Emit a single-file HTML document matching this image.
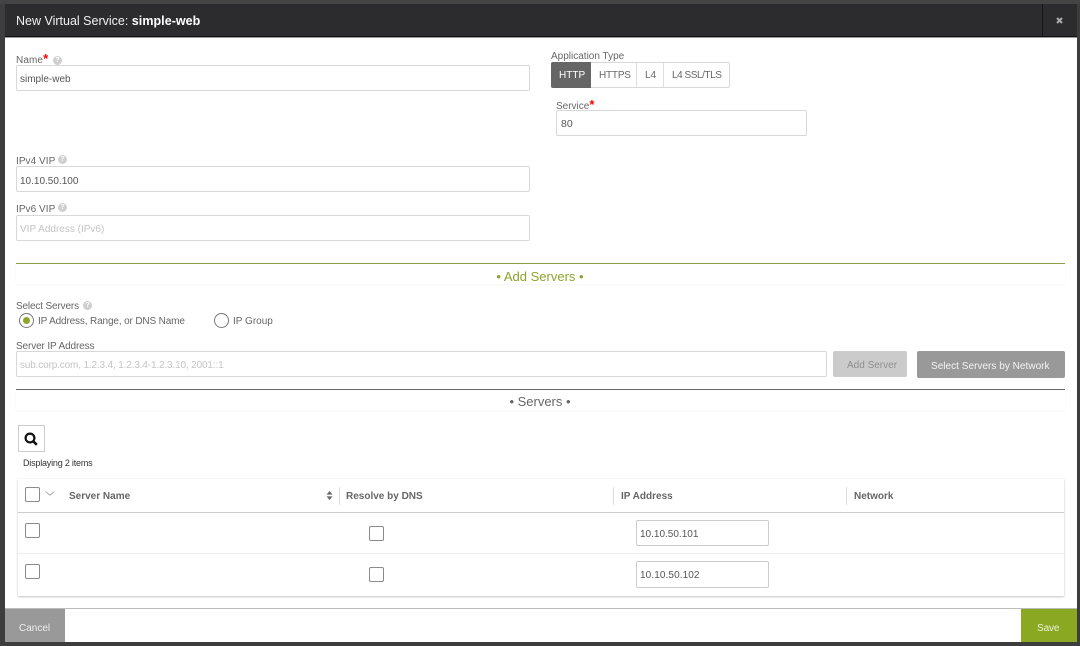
<!DOCTYPE html>
<html><head><meta charset="utf-8"><style>
html,body{margin:0;padding:0}
body{width:1080px;height:646px;overflow:hidden;background:#3d3d3d;position:relative;font-family:"Liberation Sans",sans-serif;font-size:10px;color:#666}
#w{position:absolute;left:0;top:0;width:1080px;height:646px;filter:blur(.3px)}
#w div,#w span.t,#w svg{position:absolute}
.t{white-space:nowrap;position:absolute;line-height:12px}
.i{box-sizing:border-box;background:#fff;border:1px solid #d8d8d8;border-radius:2px}
.c{box-sizing:border-box;width:15px;height:15px;border:1px solid #8a8a8a;border-radius:2px;background:#fff}
.q{box-sizing:border-box;width:9px;height:9px;border-radius:50%;background:#cfcfcf;color:#fff;font-size:7px;line-height:9px;text-align:center;font-weight:bold}
.r{color:#f00;font-weight:bold;font-size:13px;line-height:0}
.h{font-weight:bold;color:#666;font-size:10px}
.s{background:#ddd;width:1px}
</style></head><body><div id="w">
<div style="left:0;top:0;width:1080px;height:4px;background:#444"></div>
<div style="left:5px;top:37px;width:1072px;height:572px;background:#fff"></div>
<div style="left:5px;top:4px;width:1072px;height:33px;background:#2c2c2e;border-bottom:1px solid #111;box-sizing:border-box"></div>
<div style="left:5px;top:37px;width:1072px;height:1px;background:#999"></div>
<div style="left:1042px;top:4px;width:1px;height:32px;background:#151515"></div>
<span class="t" style="left:16px;top:15px;font-size:12.5px;color:#f0f0f0">New Virtual Service: <b style="color:#fff;letter-spacing:.05px">simple-web</b></span>
<svg style="left:1056px;top:17px" width="7" height="7" viewBox="0 0 7 7"><path d="M1 1L6 6M6 1L1 6" stroke="#aaa" stroke-width="2"/></svg>

<span class="t" style="left:16px;top:55px;letter-spacing:.1px">Name<span class="r">*</span></span>
<div class="q" style="left:53px;top:56px">?</div>
<div class="i" style="left:16px;top:65px;width:514px;height:26px"></div>
<span class="t" style="left:20px;top:74px;color:#555">simple-web</span>

<span class="t" style="left:551px;top:51px">Application Type</span>
<div class="i" style="left:551px;top:62px;width:179px;height:26px"></div>
<div style="left:551px;top:62px;width:40px;height:26px;background:#666;border-radius:2px 0 0 2px"></div>
<span class="t" style="left:559px;top:70px;color:#fff">HTTP</span>
<span class="t" style="left:599px;top:70px;letter-spacing:-.2px">HTTPS</span>
<div class="s" style="left:636px;top:63px;height:24px"></div>
<span class="t" style="left:645px;top:70px">L4</span>
<div class="s" style="left:663px;top:63px;height:24px"></div>
<span class="t" style="left:672px;top:70px;letter-spacing:-.45px">L4 SSL/TLS</span>

<span class="t" style="left:556px;top:101px">Service<span class="r">*</span></span>
<div class="i" style="left:556px;top:110px;width:251px;height:26px"></div>
<span class="t" style="left:561px;top:118px;color:#555;font-size:10.5px">80</span>

<span class="t" style="left:16px;top:156px;letter-spacing:.05px">IPv4 VIP</span>
<div class="q" style="left:58px;top:155px">?</div>
<div class="i" style="left:16px;top:166px;width:514px;height:26px"></div>
<span class="t" style="left:20px;top:176px;color:#555">10.10.50.100</span>

<span class="t" style="left:16px;top:204px;letter-spacing:.05px">IPv6 VIP</span>
<div class="q" style="left:58px;top:203px">?</div>
<div class="i" style="left:16px;top:215px;width:514px;height:26px"></div>
<span class="t" style="left:20px;top:224px;color:#c4c4c4">VIP Address (IPv6)</span>

<div style="left:16px;top:263px;width:1049px;height:21px;border-top:1px solid #8b9e45;box-sizing:border-box;box-shadow:0 1px 2px #f6f6f6"></div>
<span class="t" style="left:0;top:271px;width:1080px;text-align:center;font-size:13px;color:#8aa62a">• Add Servers •</span>

<span class="t" style="left:16px;top:301px;letter-spacing:-.15px">Select Servers</span>
<div class="q" style="left:83px;top:301px">?</div>
<div style="left:19px;top:313px;width:15px;height:15px;box-sizing:border-box;border:1px solid #777;border-radius:50%"></div>
<div style="left:23px;top:317px;width:7px;height:7px;background:#8aa62a;border-radius:50%"></div>
<span class="t" style="left:38px;top:316px;letter-spacing:-.14px">IP Address, Range, or DNS Name</span>
<div style="left:214px;top:313px;width:15px;height:15px;box-sizing:border-box;border:1px solid #777;border-radius:50%"></div>
<span class="t" style="left:233px;top:316px">IP Group</span>

<span class="t" style="left:16px;top:341px;letter-spacing:-.12px">Server IP Address</span>
<div class="i" style="left:16px;top:351px;width:811px;height:26px"></div>
<span class="t" style="left:20px;top:360px;color:#c4c4c4;letter-spacing:-.15px">sub.corp.com, 1.2.3.4, 1.2.3.4-1.2.3.10, 2001::1</span>
<div style="left:833px;top:351px;width:74px;height:26px;background:#cbcbcb;border-radius:2px"></div>
<span class="t" style="left:847px;top:360px;color:#8f8f8f">Add Server</span>
<div style="left:917px;top:351px;width:148px;height:27px;background:#999;border-radius:2px"></div>
<span class="t" style="left:931px;top:361px;color:#f4f4f4;letter-spacing:.03px">Select Servers by Network</span>

<div style="left:16px;top:389px;width:1049px;height:21px;border-top:1px solid #666;box-sizing:border-box;box-shadow:0 1px 2px #f6f6f6"></div>
<span class="t" style="left:0;top:396px;width:1080px;text-align:center;font-size:13px;color:#666">• Servers •</span>

<div style="left:18px;top:425px;width:27px;height:27px;box-sizing:border-box;border:1px solid #ccc"></div>
<svg style="left:24px;top:432px" width="14" height="14" viewBox="0 0 14 14"><circle cx="6" cy="6" r="4.4" fill="none" stroke="#111" stroke-width="2.2"/><path d="M9 9L12.8 12.8" stroke="#111" stroke-width="2.6"/></svg>
<span class="t" style="left:23px;top:457px;font-size:9px;color:#333;letter-spacing:-.2px">Displaying 2 items</span>

<div style="left:18px;top:479px;width:1046px;height:117px;box-shadow:0 1px 2px #c4c4c4,0 0 1px #e8e8e8;background:#fff"></div>
<div style="left:18px;top:512px;width:1046px;height:1px;background:#ccc"></div>
<div style="left:18px;top:553px;width:1046px;height:1px;background:#eee"></div>

<div class="c" style="left:25px;top:487px"></div>
<svg style="left:45px;top:491px" width="10" height="5" viewBox="0 0 10 5"><path d="M.5 .5L5 4.2L9.5 .5" fill="none" stroke="#999" stroke-width=".8"/></svg>
<span class="t h" style="left:69px;top:491px">Server Name</span>
<svg style="left:326px;top:491px" width="7" height="9" viewBox="0 0 7 9"><path d="M3.5 0L6.5 3.6H.5ZM3.5 9L6.5 5.4H.5Z" fill="#666"/></svg>
<div class="s" style="left:339px;top:487px;height:18px"></div>
<span class="t h" style="left:346px;top:491px">Resolve by DNS</span>
<div class="s" style="left:613px;top:487px;height:18px"></div>
<span class="t h" style="left:621px;top:491px">IP Address</span>
<div class="s" style="left:846px;top:487px;height:18px"></div>
<span class="t h" style="left:854px;top:491px">Network</span>

<div class="c" style="left:25px;top:523px"></div>
<div class="c" style="left:369px;top:526px"></div>
<div class="i" style="left:636px;top:520px;width:133px;height:26px;border-color:#ccc"></div>
<span class="t" style="left:640px;top:529px;color:#555">10.10.50.101</span>

<div class="c" style="left:25px;top:564px"></div>
<div class="c" style="left:369px;top:567px"></div>
<div class="i" style="left:636px;top:561px;width:133px;height:27px;border-color:#ccc"></div>
<span class="t" style="left:640px;top:570px;color:#555;letter-spacing:.1px">10.10.50.102</span>

<div style="left:5px;top:608px;width:1072px;height:1px;background:#bbb"></div>
<div style="left:5px;top:609px;width:1072px;height:33px;background:#fff"></div>
<div style="left:5px;top:609px;width:60px;height:33px;background:#999"></div>
<span class="t" style="left:19px;top:623px;color:#eee">Cancel</span>
<div style="left:1021px;top:609px;width:56px;height:33px;background:#8aa822"></div>
<span class="t" style="left:1037px;top:623px;color:#eef3d8;letter-spacing:-.1px">Save</span>
</div></body></html>
